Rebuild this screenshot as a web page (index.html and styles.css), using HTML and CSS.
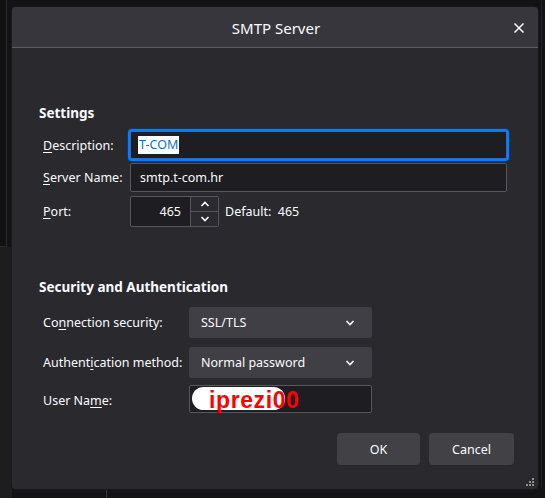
FILE: index.html
```html
<!DOCTYPE html>
<html>
<head>
<meta charset="utf-8">
<link rel="stylesheet" href="styles.css">
</head>
<body>
<div class="desk">
  <div class="bgwin bgwin-left"></div>
  <div class="bgwin bgwin-lower"></div>
  <div class="bgwin bgwin-bottom"></div>
  <div class="bgwin bgwin-right"></div>

  <div class="dialog">
    <div class="titlebar">
      <span class="title">SMTP Server</span>
      <svg class="close" width="12" height="12" viewBox="0 0 12 12"><path d="M1.5 1.5 L10.5 10.5 M10.5 1.5 L1.5 10.5" stroke="#fbfbfe" stroke-width="1.5" fill="none"/></svg>
    </div>
    <div class="content">
      <h2 class="heading h-settings">Settings</h2>
      <div class="grid grid-settings">
        <label class="lbl"><u>D</u>escription:</label>
        <div class="field focused"><span class="sel">T-COM</span></div>
        <label class="lbl"><u>S</u>erver Name:</label>
        <div class="field">smtp.t-com.hr</div>
        <label class="lbl"><u>P</u>ort:</label>
        <div class="portrow">
          <div class="field port">
            <span class="portval">465</span>
            <div class="spin">
              <div class="spinbtn"><svg width="10" height="6" viewBox="0 0 10 6"><path d="M1.5 5 L5 1.5 L8.5 5" stroke="#fbfbfe" stroke-width="1.6" fill="none"/></svg></div>
              <div class="spinbtn"><svg width="10" height="6" viewBox="0 0 10 6"><path d="M1.5 1 L5 4.5 L8.5 1" stroke="#fbfbfe" stroke-width="1.6" fill="none"/></svg></div>
            </div>
          </div>
          <span class="default">Default:&nbsp; 465</span>
        </div>
      </div>

      <h2 class="heading h-security">Security and Authentication</h2>
      <div class="grid grid-security">
        <label class="lbl">Co<u>n</u>nection security:</label>
        <div class="select">SSL/TLS<svg class="chev" width="10" height="6" viewBox="0 0 10 6"><path d="M1.5 1 L5 4.5 L8.5 1" stroke="#fbfbfe" stroke-width="1.6" fill="none"/></svg></div>
        <label class="lbl">Authent<u>i</u>cation method:</label>
        <div class="select">Normal password<svg class="chev" width="10" height="6" viewBox="0 0 10 6"><path d="M1.5 1 L5 4.5 L8.5 1" stroke="#fbfbfe" stroke-width="1.6" fill="none"/></svg></div>
        <label class="lbl">User Na<u>m</u>e:</label>
        <div class="field user">
          <span class="blob"></span>
          <span class="redact">iprezi00</span>
        </div>
      </div>

      <div class="buttons">
        <button class="btn btn-ok">OK</button>
        <button class="btn btn-cancel">Cancel</button>
      </div>
    </div>
    <svg class="grip" width="9" height="9" viewBox="0 0 9 9">
      <rect x="6" y="0" width="2" height="2" fill="#8e8d93"/>
      <rect x="3" y="3" width="2" height="2" fill="#8e8d93"/>
      <rect x="6" y="3" width="2" height="2" fill="#8e8d93"/>
      <rect x="0" y="6" width="2" height="2" fill="#8e8d93"/>
      <rect x="3" y="6" width="2" height="2" fill="#8e8d93"/>
      <rect x="6" y="6" width="2" height="2" fill="#8e8d93"/>
    </svg>
  </div>
</div>
</body>
</html>
```

FILE: styles.css
```css
html, body {
  margin: 0;
  padding: 0;
}
body {
  background: #131315;
  font-family: "Noto Sans", "Open Sans", sans-serif;
  font-size: 12px;
  color: #fbfbfe;
}
.desk {
  position: relative;
  width: 545px;
  height: 498px;
  overflow: hidden;
}
.bgwin {
  position: absolute;
}
.bgwin-left {
  left: 0;
  top: 0;
  width: 6px;
  height: 246px;
  background: #111112;
  border-right: 1px solid #2a2a2c;
  border-bottom: 1px solid #2a2a2c;
}
.bgwin-lower {
  left: 0;
  top: 247px;
  width: 12px;
  height: 251px;
  background: #1d1d1f;
}
.bgwin-bottom {
  left: 106px;
  top: 488px;
  width: 1px;
  height: 10px;
  background: #3a3a3d;
}
.bgwin-right {
  left: 541px;
  top: 0;
  width: 1px;
  height: 488px;
  background: #232325;
}
.dialog {
  position: absolute;
  left: 12px;
  top: 7px;
  width: 526px;
  height: 482px;
  background: #2a292e;
  border-radius: 4px;
  overflow: hidden;
  box-shadow: 0 0 0 1px #1a1a1c;
}
.titlebar {
  height: 40px;
  background: #37363c;
  border-bottom: 1px solid #5d5c62;
  display: flex;
  align-items: center;
  justify-content: center;
  position: relative;
}
.title {
  font-size: 15px;
  margin-left: 2px;
  margin-top: 2px;
}
.close {
  position: absolute;
  right: 13px;
  top: 15px;
}
.content {
  padding: 55px 31px 0 27px;
}
.heading {
  margin: 0;
  font-size: 13.5px;
  font-weight: bold;
  line-height: 20px;
}
.grid {
  display: grid;
  align-items: center;
}
.grid-settings {
  margin-top: 8px;
  grid-template-columns: 91px 377px;
  row-gap: 4px;
}
.lbl {
  padding-left: 4px;
  font-size: 12.5px;
}
.lbl u {
  text-decoration-thickness: 1px;
  text-underline-offset: 2px;
}
.field {
  box-sizing: border-box;
  height: 29px;
  border: 1px solid #57565c;
  border-radius: 2px;
  background: #1e1d22;
  display: flex;
  align-items: center;
  padding-left: 9px;
  font-size: 12.5px;
}
.focused {
  height: 28px;
  border-color: #1f6fd6;
  box-shadow: 0 0 0 2px #0e7cf5, 0 0 0 3px #0c3b72;
  padding-left: 7px;
}
.sel {
  background: #ffffff;
  color: #0b6fd8;
  padding: 0 1px;
  line-height: 18px;
}
.portrow {
  display: flex;
  align-items: center;
  gap: 6px;
}
.port {
  width: 89px;
  height: 31px;
  padding: 0;
  justify-content: flex-end;
}
.portval {
  margin-right: 9px;
}
.spin {
  width: 27px;
  height: 29px;
  display: flex;
  flex-direction: column;
  border-left: 1px solid #57565c;
  background: #2b2a30;
}
.spinbtn {
  flex: 1;
  display: flex;
  align-items: center;
  justify-content: center;
}
.spinbtn + .spinbtn {
  border-top: 1px solid #57565c;
}
.default {
  font-size: 12.5px;
}
.h-security {
  margin-top: 50px;
}
.grid-security {
  margin-top: 10px;
  grid-template-columns: 150px 183px;
  row-gap: 9px;
}
.select {
  height: 31px;
  background: #403f45;
  border-radius: 3px;
  display: flex;
  align-items: center;
  justify-content: space-between;
  padding: 0 17px 0 12px;
  font-size: 12.5px;
}
.chev {
  margin-top: 1px;
}
.user {
  height: 28px;
  margin-top: -2px;
  position: relative;
  padding-left: 0;
}
.blob {
  position: absolute;
  left: 2px;
  top: 1px;
  width: 93px;
  height: 23px;
  background: #ffffff;
  border-radius: 12px;
}
.redact {
  position: relative;
  margin-left: 19px;
  margin-top: 2px;
  font-family: "Liberation Sans", Arial, sans-serif;
  font-weight: bold;
  font-size: 23px;
  letter-spacing: 0.6px;
  color: #ff0000;
  line-height: 22px;
}
.buttons {
  display: flex;
  justify-content: flex-end;
  gap: 9px;
  margin-top: 20px;
  margin-right: -7px;
}
.btn {
  height: 32px;
  border: none;
  border-radius: 4px;
  background: #424146;
  color: #fbfbfe;
  font-family: "Noto Sans", "Open Sans", sans-serif;
  font-size: 12.5px;
}
.btn-ok {
  width: 83px;
}
.btn-cancel {
  width: 85px;
}
.grip {
  position: absolute;
  right: 3px;
  bottom: 2px;
}
```
